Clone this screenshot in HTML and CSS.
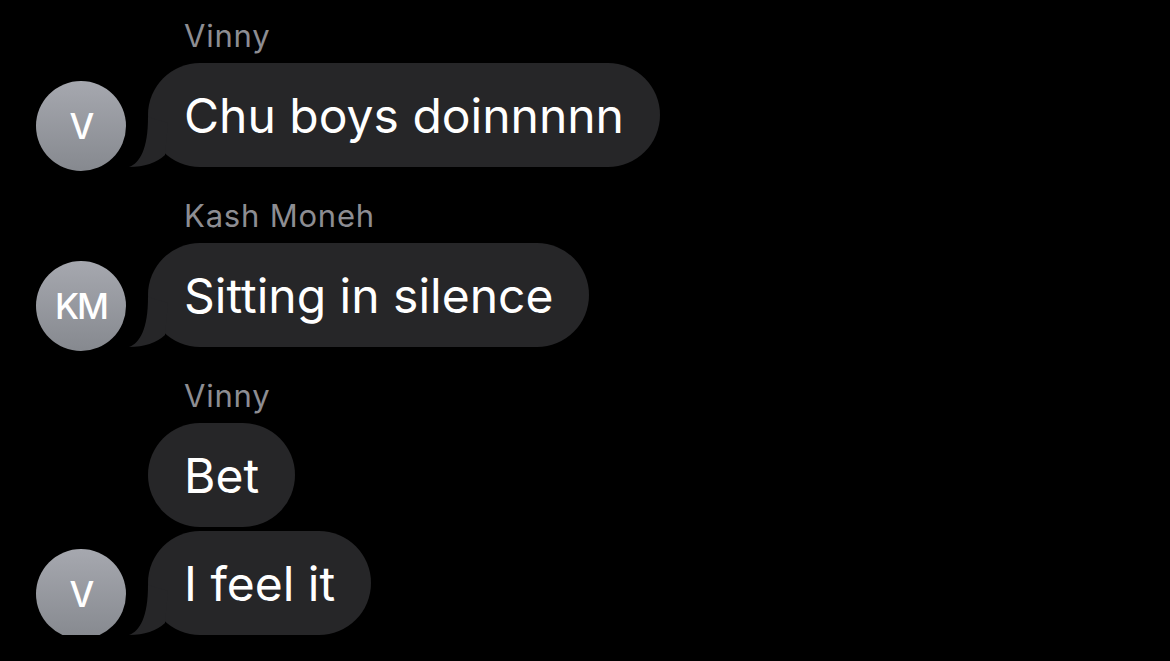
FILE: index.html
```html
<!DOCTYPE html>
<html lang="en">

<head>
    <meta charset="UTF-8">
    <meta name="viewport" content="width=device-width, initial-scale=1.0">
    <title>Messages</title>
    <link rel="stylesheet" href="styles.css">
</head>

<body>
    <div class="thread">
        <div class="group">
            <div class="sender">Vinny</div>
            <div class="row">
                <div class="avatar">V</div>
                <div class="bubble">
                    Chu boys doinnnnn
                    <svg class="tail" viewBox="0 0 40 54"><path d="M20 4 C20 36 12 50 1 54 Q24 54 37 42 L40 10 Z" /></svg>
                </div>
            </div>
        </div>

        <div class="group">
            <div class="sender">Kash Moneh</div>
            <div class="row">
                <div class="avatar">KM</div>
                <div class="bubble">
                    Sitting in silence
                    <svg class="tail" viewBox="0 0 40 54"><path d="M20 4 C20 36 12 50 1 54 Q24 54 37 42 L40 10 Z" /></svg>
                </div>
            </div>
        </div>

        <div class="group">
            <div class="sender">Vinny</div>
            <div class="row">
                <div class="avatar empty"></div>
                <div class="bubble">Bet</div>
            </div>
            <div class="row">
                <div class="avatar">V</div>
                <div class="bubble">
                    I feel it
                    <svg class="tail" viewBox="0 0 40 54"><path d="M20 4 C20 36 12 50 1 54 Q24 54 37 42 L40 10 Z" /></svg>
                </div>
            </div>
        </div>
    </div>
</body>

</html>
```

FILE: styles.css
```css
* {
    margin: 0;
    padding: 0;
    box-sizing: border-box;
}

body {
    background-color: #000;
    font-family: Inter, "Noto Sans", sans-serif;
    color: #fff;
}

.thread {
    display: flex;
    flex-direction: column;
    gap: 31px;
    padding: 18px 0 0 36px;
}

.group {
    display: flex;
    flex-direction: column;
    gap: 4px;
}

.sender {
    margin: 0 0 5px 148px;
    font-size: 31px;
    line-height: 36px;
    letter-spacing: 0.8px;
    color: #8d8d92;
}

.row {
    display: flex;
    align-items: flex-end;
    gap: 22px;
}

.avatar {
    flex: none;
    width: 90px;
    height: 90px;
    margin-bottom: -4px;
    border-radius: 50%;
    background: linear-gradient(#a6a8af, #86898f);
    display: flex;
    align-items: center;
    justify-content: center;
    font-size: 35px;
    font-weight: 500;
    letter-spacing: -2px;
}

.avatar.empty {
    visibility: hidden;
}

.bubble {
    position: relative;
    height: 104px;
    padding: 0 36px;
    border-radius: 52px;
    background-color: #262628;
    display: flex;
    align-items: center;
    font-size: 48px;
    white-space: nowrap;
}

/* little hook at the bottom left of the last bubble */
.bubble .tail {
    position: absolute;
    left: -20px;
    bottom: 0;
    width: 40px;
    height: 54px;
    fill: #262628;
}
```
